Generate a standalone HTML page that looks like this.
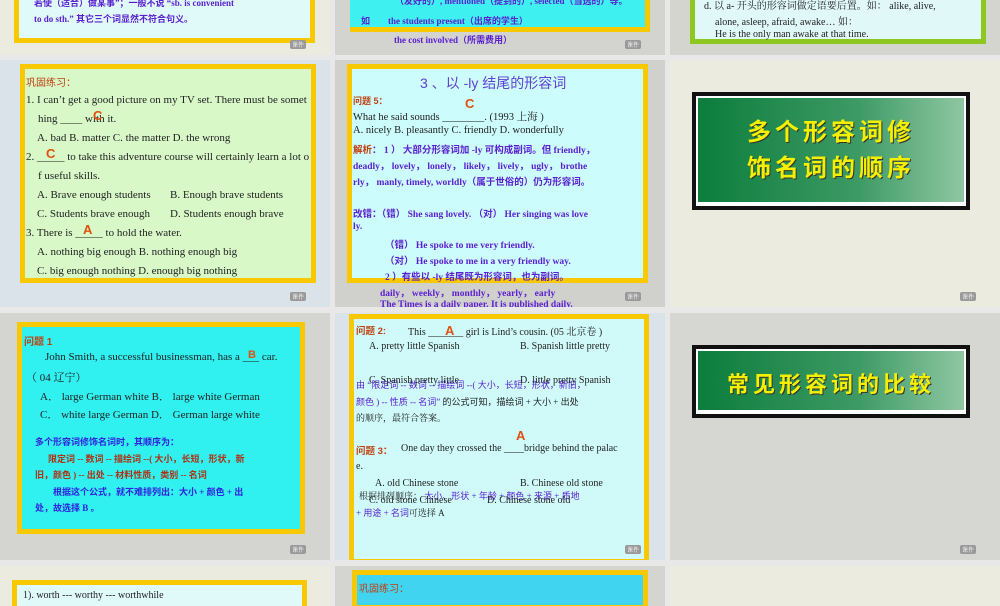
<!DOCTYPE html><html><head><meta charset="utf-8"><style>
body{margin:0;width:1000px;height:600px;overflow:hidden;background:#e8e8e8;position:relative;font-family:"Liberation Serif","Noto Serif CJK SC",serif;}
.t{position:absolute;overflow:hidden}
.b{position:absolute;box-sizing:border-box}
.l{position:absolute;white-space:nowrap;font-size:10px;color:#222}
.p{color:#5a20d0;font-weight:bold;font-family:"Liberation Serif","Noto Sans CJK SC",serif}
.o{color:#c04010;font-weight:bold;font-family:"Liberation Sans","Noto Sans CJK SC",sans-serif}
.ans{color:#e05010;font-weight:bold;font-family:"Liberation Sans",sans-serif;font-size:13px}
.wm{position:absolute;font-size:6px;color:#fff;background:#999;padding:0 2px;border-radius:2px}
.ban{position:absolute;background:#fff;border:4px solid #111;box-sizing:border-box}
.ban div{position:absolute;left:2px;right:2px;top:2px;bottom:4px;background:linear-gradient(90deg,#0c7d3c,#3d9a64 60%,#8fc7a3);color:#f5f000;font-family:"Noto Sans CJK SC",sans-serif;font-weight:bold;text-align:center;text-shadow:1px 1px 0 #333;letter-spacing:4px}
.r2 .l{font-size:11px}
</style></head><body>
<!-- row1 -->
<div class="t" style="left:0;top:0;width:330px;height:55px;background:#ebebdf">
 <div class="b" style="left:14px;top:-10px;width:301px;height:53px;background:#e0fafa;border:5px solid #f8c800"></div>
 <div class="l p" style="left:34px;top:-4px;font-size:9px">若使（适合）做某事”；一般不说 “sb. is convenient</div>
 <div class="l p" style="left:34px;top:12px;font-size:9px">to do sth.” 其它三个词显然不符合句义。</div>
 <div class="wm" style="left:290px;top:40px">课件</div>
</div>
<div class="t" style="left:335px;top:0;width:330px;height:55px;background:#d3d3cf">
 <div class="b" style="left:15px;top:-10px;width:300px;height:42px;background:#3ef0f0;border:5px solid #f8c800;border-left:none"></div>
 <div class="l p" style="left:60px;top:-6px;font-size:9px">（友好的）, mentioned（提到的）, selected（当选的）等。</div>
 <div class="l p" style="left:26px;top:14px;font-size:9px">如　　the students present（出席的学生）</div>
 <div class="l p" style="left:59px;top:33px;font-size:9px">the cost involved（所需费用）</div>
 <div class="wm" style="left:290px;top:40px">课件</div>
</div>
<div class="t" style="left:670px;top:0;width:330px;height:55px;background:#d5d5d0">
 <div class="b" style="left:20px;top:-10px;width:296px;height:54px;background:#e0f8f8;border:5px solid #8cc820;border-top:none"></div>
 <div class="l" style="left:34px;top:-3px">d.  以  a-  开头的形容词做定语要后置。如： alike, alive,</div>
 <div class="l" style="left:45px;top:13px">alone, asleep, afraid, awake…  如：</div>
 <div class="l" style="left:45px;top:29px">He is the only man awake at that time.</div>
</div>
<!-- row2 -->
<div class="t r2" style="left:0;top:60px;width:330px;height:247px;background:#dbe3ea">
 <div class="b" style="left:20px;top:4px;width:296px;height:219px;background:#d8f8c8;border:5px solid #f8c800"></div>
 <div class="l o" style="left:26px;top:14px;font-size:10px;font-weight:normal">巩固练习：</div>
 <div class="l" style="left:26px;top:34px">1. I can’t get a good picture on my TV set. There must be somet</div>
 <div class="l" style="left:38px;top:53px">hing ____ with it.</div><div class="ans" style="position:absolute;left:93px;top:48px">C</div>
 <div class="l" style="left:37px;top:72px">A. bad  B. matter        C. the matter   D. the wrong</div>
 <div class="l" style="left:26px;top:91px">2. _____ to take this adventure course will certainly learn a lot o</div><div class="ans" style="position:absolute;left:46px;top:86px">C</div>
 <div class="l" style="left:38px;top:110px">f useful skills.</div>
 <div class="l" style="left:37px;top:129px">A. Brave enough students</div><div class="l" style="left:170px;top:129px">B. Enough brave students</div>
 <div class="l" style="left:37px;top:148px">C. Students brave enough</div><div class="l" style="left:170px;top:148px">D. Students enough brave</div>
 <div class="l" style="left:26px;top:167px">3. There is _____ to hold the water.</div><div class="ans" style="position:absolute;left:83px;top:162px">A</div>
 <div class="l" style="left:37px;top:186px">A. nothing big enough B. nothing enough big</div>
 <div class="l" style="left:37px;top:205px">C. big enough nothing D. enough big nothing</div>
 <div class="wm" style="left:290px;top:232px">课件</div>
</div>
<div class="t" style="left:335px;top:60px;width:330px;height:247px;background:#d0d0cc">
 <div class="b" style="left:12px;top:4px;width:301px;height:219px;background:#ccfcfc;border:5px solid #f8c800"></div>
 <div class="l" style="left:85px;top:13px;font-size:14px;color:#6040d0;font-family:'Liberation Sans','Noto Sans CJK SC',sans-serif">3 、以 -ly  结尾的形容词</div>
 <div class="l o" style="left:18px;top:34px;font-size:9px">问题 5：</div><div class="ans" style="position:absolute;left:130px;top:36px">C</div>
 <div class="l" style="left:18px;top:49px;font-size:10.5px">What he said sounds ________. (1993 上海 )</div>
 <div class="l" style="left:18px;top:65px;font-size:10.5px">A. nicely  B. pleasantly   C. friendly      D. wonderfully</div>
 <div class="l p" style="left:18px;top:82px;font-size:9.5px"><span style="color:#c04010">解析</span>： 1 ） 大部分形容词加 -ly  可构成副词。但  friendly，</div>
 <div class="l p" style="left:18px;top:98px;font-size:9.5px">deadly， lovely， lonely， likely， lively， ugly， brothe</div>
 <div class="l p" style="left:18px;top:114px;font-size:9.5px">rly， manly, timely, worldly（属于世俗的）仍为形容词。</div>
 <div class="l p" style="left:18px;top:146px;font-size:9.5px">改错：（错） She sang lovely. （对） Her singing was love</div>
 <div class="l p" style="left:18px;top:162px;font-size:9.5px">ly.</div>
 <div class="l p" style="left:50px;top:177px;font-size:9.5px">（错） He spoke to me very friendly.</div>
 <div class="l p" style="left:50px;top:193px;font-size:9.5px">（对） He spoke to me in a very friendly way.</div>
 <div class="l p" style="left:50px;top:209px;font-size:9.5px">2 ）有些以 -ly 结尾既为形容词，也为副词。</div>
 <div class="l p" style="left:45px;top:225px;font-size:9.5px">daily， weekly， monthly， yearly， early</div>
 <div class="l p" style="left:45px;top:240px;font-size:9.5px">The Times is a daily paper. It is published daily.</div>
 <div class="wm" style="left:290px;top:232px">课件</div>
</div>
<div class="t" style="left:670px;top:60px;width:330px;height:247px;background:#ebebe0">
 <div class="ban" style="left:22px;top:32px;width:278px;height:118px"><div style="font-size:24px;line-height:36px;padding-top:14px">多个形容词修<br>饰名词的顺序</div></div>
 <div class="wm" style="left:290px;top:232px">课件</div>
</div>
<!-- row3 -->
<div class="t" style="left:0;top:313px;width:330px;height:247px;background:#d4d4d0">
 <div class="b" style="left:17px;top:9px;width:288px;height:212px;background:#30f0f0;border:5px solid #f8c800"></div>
 <div class="l o" style="left:24px;top:20px;font-size:10px">问题 1</div>
 <div class="l" style="left:45px;top:38px;font-size:11px">John Smith, a successful businessman, has a ___ car.</div><div class="ans" style="position:absolute;left:248px;top:36px;font-size:11px">B</div>
 <div class="l" style="left:26px;top:56px;font-size:11px">（ 04 辽宁）</div>
 <div class="l" style="left:40px;top:75px;font-size:11px">A．  large German white  B．  large white German</div>
 <div class="l" style="left:40px;top:93px;font-size:11px">C．  white large German  D．  German large white</div>
 <div class="l p" style="left:35px;top:122px;font-size:9px;color:#3020e0">多个形容词修饰名词时，其顺序为：</div>
 <div class="l p" style="left:48px;top:139px;font-size:9px;color:#b03010">限定词 -- 数词 -- 描绘词 --( 大小，长短，形状，新</div>
 <div class="l p" style="left:35px;top:155px;font-size:9px;color:#b03010">旧，颜色 ) -- 出处 -- 材料性质，类别 -- 名词</div>
 <div class="l p" style="left:53px;top:172px;font-size:9px;color:#3020e0">根据这个公式，就不难排列出：大小 + 颜色 + 出</div>
 <div class="l p" style="left:35px;top:188px;font-size:9px;color:#3020e0">处，故选择 B 。</div>
 <div class="wm" style="left:290px;top:232px">课件</div>
</div>
<div class="t" style="left:335px;top:313px;width:330px;height:247px;background:#dbe3ea">
 <div class="b" style="left:14px;top:1px;width:300px;height:250px;background:#d0fafa;border:5px solid #f8c800"></div>
 <div class="l o" style="left:21px;top:10px;font-size:9.5px">问题 2:</div>
 <div class="l" style="left:73px;top:10px">This _______ girl is Lind’s cousin.  (05 北京卷 )</div><div class="ans" style="position:absolute;left:110px;top:10px">A</div>
 <div class="l" style="left:34px;top:28px">A. pretty little Spanish</div><div class="l" style="left:185px;top:28px">B. Spanish little pretty</div>
 <div class="l p" style="left:21px;top:65px;font-size:9px;font-weight:normal">由 “限定词 -- 数词 -- 描绘词 --( 大小，长短，形状，新旧，</div>
 <div class="l" style="left:34px;top:62px">C. Spanish pretty little</div><div class="l" style="left:185px;top:62px">D. little pretty Spanish</div>
 <div class="l p" style="left:21px;top:82px;font-size:9px;font-weight:normal">颜色 ) -- 性质 -- 名词” <span style="color:#222">的公式可知，描绘词 + 大小 + 出处</span></div>
 <div class="l" style="left:21px;top:98px;font-size:9px">的顺序，最符合答案。</div>
 <div class="ans" style="position:absolute;left:181px;top:115px">A</div>
 <div class="l o" style="left:21px;top:130px;font-size:9.5px">问题 3：</div><div class="l" style="left:66px;top:130px">One day they crossed the ____bridge behind the palac</div>
 <div class="l" style="left:21px;top:148px">e.</div>
 <div class="l" style="left:40px;top:165px">A. old Chinese stone</div><div class="l" style="left:185px;top:165px">B. Chinese old stone</div>
 <div class="l" style="left:24px;top:176px;font-size:9px">根据排列顺序： <span class="p" style="font-weight:normal">大小、形状 + 年龄 + 颜色 + 来源 + 质地</span></div>
 <div class="l" style="left:34px;top:182px">C. old stone Chinese</div><div class="l" style="left:152px;top:182px">D. Chinese stone old</div>
 <div class="l" style="left:21px;top:193px;font-size:9px"><span class="p" style="font-weight:normal">+ 用途 + 名词</span>可选择 A</div>
 <div class="wm" style="left:290px;top:232px">课件</div>
</div>
<div class="t" style="left:670px;top:313px;width:330px;height:247px;background:#d6d6d2">
 <div class="ban" style="left:22px;top:32px;width:278px;height:73px"><div style="font-size:22px;line-height:56px;padding-top:4px">常见形容词的比较</div></div>
 <div class="wm" style="left:290px;top:232px">课件</div>
</div>
<!-- row4 -->
<div class="t" style="left:0;top:566px;width:330px;height:40px;background:#ebebdf">
 <div class="b" style="left:12px;top:14px;width:295px;height:40px;background:#e0fafa;border:5px solid #f8c800"></div>
 <div class="l" style="left:23px;top:24px">1). worth --- worthy --- worthwhile</div>
</div>
<div class="t" style="left:335px;top:566px;width:330px;height:40px;background:#d4d4d0">
 <div class="b" style="left:17px;top:4px;width:296px;height:40px;background:#40d4f0;border:5px solid #f8c800"></div>
 <div class="l o" style="left:24px;top:14px;font-size:10px;font-weight:normal">巩固练习：</div>
</div>
<div class="t" style="left:670px;top:566px;width:330px;height:40px;background:#ebebe0"></div>
</body></html>
